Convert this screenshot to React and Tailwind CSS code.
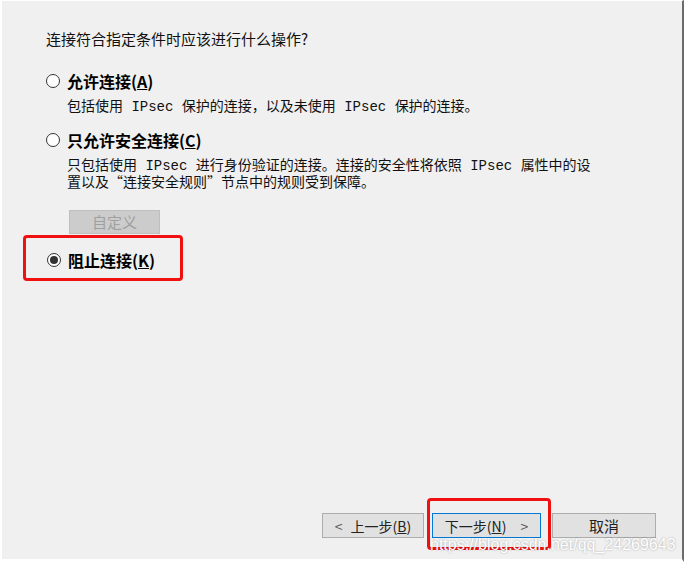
const cjk = "font-['Noto_Sans_CJK_SC','Noto_Sans',sans-serif]";

function Radio({ checked }) {
  return (
    <span className="flex h-[14px] w-[14px] shrink-0 items-center justify-center rounded-full border border-[#333] bg-white">
      {checked ? <span className="h-[8px] w-[8px] rounded-full bg-[#333]" /> : null}
    </span>
  );
}

function Option({ label, accel, checked }) {
  return (
    <div className="flex h-[20px] items-center gap-[7px]">
      <Radio checked={checked} />
      <span className="text-[16px] font-bold leading-[20px] text-black">
        {label}(<span className="underline">{accel}</span>)
      </span>
    </div>
  );
}

function Ip() {
  return <span className="font-['Liberation_Mono',monospace] text-[14px] leading-none"> IPsec </span>;
}

function WizButton({ children, focused }) {
  return (
    <button
      type="button"
      className={`flex h-[25px] w-full items-center justify-center bg-[#e1e1e1] text-[14px] leading-none text-[#222] ${
        focused ? "border border-[#0078d7]" : "border border-[#adadad]"
      }`}
    >
      {children}
    </button>
  );
}

export default function App() {
  return (
    <div
      className={`${cjk} relative flex h-[562px] w-[684px] flex-col overflow-hidden border-t border-b-[3px] border-l-2 border-r-2 border-t-white border-b-white border-l-white border-r-[#6b6b6b] bg-[#f0f0f0]`}
    >
      <div className="pl-[44px] pt-[28px]">
        <p className="text-[15px] leading-[20px] text-[#111]">连接符合指定条件时应该进行什么操作?</p>

        <div className="mt-[22px]">
          <Option label="允许连接" accel="A" />
          <p className="ml-[21px] mt-[6px] text-[14px] leading-[16px] text-[#111]">
            包括使用<Ip />保护的连接，以及未使用<Ip />保护的连接。
          </p>
        </div>

        <div className="mt-[16px]">
          <Option label="只允许安全连接" accel="C" />
          <p className="ml-[21px] mt-[6px] text-[14px] leading-[16px] text-[#111]">
            只包括使用<Ip />进行身份验证的连接。连接的安全性将依照<Ip />属性中的设
            <br />
            置以及“连接安全规则”节点中的规则受到保障。
          </p>
        </div>

        <div className="ml-[23px] mt-[21px] flex h-[24px] w-[91px] items-center justify-center border border-[#bfbfbf] bg-[#cccccc] text-[15px] text-[#a0a0a0]">
          自定义
        </div>
      </div>

      <div className="ml-[21px] mt-[1px] flex h-[46px] w-[160px] items-center rounded-[4px] border-[3px] border-[#f01010] pl-[21px] pt-[3px]">
        <Option label="阻止连接" accel="K" checked />
      </div>

      <div className="mt-auto flex items-center pb-[21px] pl-[320px]">
        <div className="w-[102px]">
          <WizButton>
            <span className="flex w-full items-center justify-center gap-[8px]">
              <span className="text-[#555]">&lt;</span>
              <span>
                上一步(<span className="underline">B</span>)
              </span>
            </span>
          </WizButton>
        </div>
        <div className="relative ml-[8px] w-[109px]">
          <WizButton focused>
            <span className="flex w-full items-center justify-center gap-[14px]">
              <span>
                下一步(<span className="underline">N</span>)
              </span>
              <span className="text-[#555]">&gt;</span>
            </span>
          </WizButton>
          <div className="pointer-events-none absolute -bottom-[12px] -left-[5px] -right-[10px] -top-[15px] rounded-[4px] border-[3px] border-[#f01010]" />
        </div>
        <div className="ml-[11px] w-[104px]">
          <WizButton>
            <span className="w-full text-[15px]">取消</span>
          </WizButton>
        </div>
      </div>

      <span className="pointer-events-none absolute left-[428px] top-[532px] font-['Liberation_Sans',sans-serif] text-[16px] text-white [text-shadow:0_0_2px_rgba(0,0,0,0.35)]">
        https://blog.csdn.net/qq_24269643
      </span>
    </div>
  );
}
